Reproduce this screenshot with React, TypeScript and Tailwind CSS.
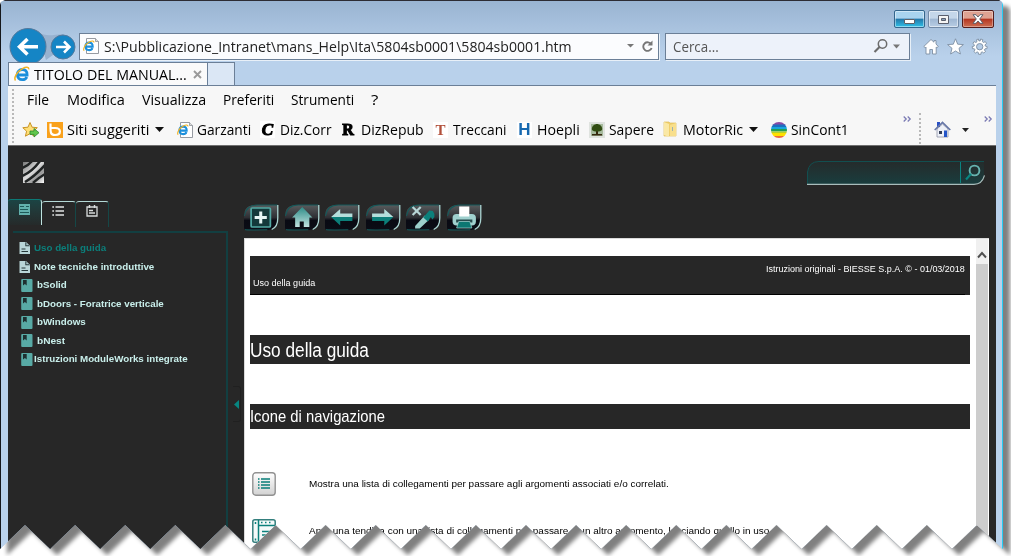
import React, { useLayoutEffect, useRef, useState } from "react";

type FitProps = { text: string; w: number; className?: string };

/* Single line of text, condensed or widened so that it spans w pixels. */
function Fit({ text, w, className = "" }: FitProps) {
  const ref = useRef<HTMLSpanElement>(null);
  const [scale, setScale] = useState(1);
  useLayoutEffect(() => {
    if (ref.current) setScale(w / ref.current.offsetWidth);
  }, [text, w]);
  return (
    <span className={"block shrink-0 whitespace-pre " + className} style={{ width: w }}>
      <span ref={ref} className="inline-block origin-left align-top" style={{ transform: `scaleX(${scale})` }}>
        {text}
      </span>
    </span>
  );
}

const zigzag = (() => {
  const pts = ["0px 5px", "1px 2px", "5px 0px", "999px 0px", "1002px 2px", "1003px 5px", "1003px 549px"];
  for (let i = 19; i >= 0; i--) {
    pts.push(`${(i * 50.1 + 25).toFixed(1)}px 525px`);
    pts.push(`${(i * 50.1).toFixed(1)}px 549px`);
  }
  return `polygon(${pts.join(",")})`;
})();

function IeIcon({ page = false }: { page?: boolean }) {
  return (
    <svg width="16" height="16" viewBox="0 0 16 16" className="shrink-0">
      {page && <path d="M3.5.5h9l3 3v12h-12z" fill="#fff" stroke="#8b9097" strokeWidth=".9" />}
      {page && <path d="M12.5.5v3h3" fill="#ddd" stroke="#8b9097" strokeWidth=".8" />}
      <g transform={page ? "translate(0 2) scale(.74)" : ""}>
        <path d="M3.5 9h9.6c.2-4-2-5.5-4.8-5.5-3 0-5 2-5 5s2 5.2 5 5.2c2.200 0 3.800-1 4.500-2.800" fill="none" stroke="#1b8fdc" strokeWidth="2.800" />
        <path d="M1.500 14.500C-.5 12 3 5.500 8.500 2.600c3.500-1.900 6.500-1.800 6.300.8" fill="none" stroke="#f0b323" strokeWidth="1.500" />
      </g>
    </svg>
  );
}

function Caret({ color = "#111" }: { color?: string }) {
  return (
    <svg width="9" height="5" viewBox="0 0 9 5" className="shrink-0">
      <path d="M0 0h9L4.500 5z" fill={color} />
    </svg>
  );
}

function Chevrons() {
  return (
    <svg width="9" height="6" viewBox="0 0 9 6" className="shrink-0">
      <path d="M.7.5 3.200 3 .7 5.500M4.700.5 7.200 3 4.700 5.500" fill="none" stroke="#7d7db5" strokeWidth="1.300" />
    </svg>
  );
}

function Chrome() {
  return (
    <div className="flex h-[84px] shrink-0 flex-col">
      <div className="flex h-[30px] shrink-0 justify-end gap-[3px] pt-[9px] pr-[2px]">
        <div className="flex h-[18px] w-[31px] items-center justify-center rounded-[2px] border border-[#33658c] bg-linear-to-b from-[#a9d4ef] from-45% via-[#2377a9] via-50% to-[#2fc0e8] pt-1 shadow-[inset_0_0_0_1px_#ffffff70]">
          <div className="h-[5px] w-[11px] rounded-[1px] border border-[#5e6067] bg-white" />
        </div>
        <div className="flex h-[18px] w-[31px] items-center justify-center rounded-[2px] border border-[#7189a6] bg-linear-to-b from-[#c5d7ea] from-45% via-[#9fb7d3] via-50% to-[#b8cde4] shadow-[inset_0_0_0_1px_#ffffff80]">
          <svg width="11" height="9" viewBox="0 0 11 9">
            <path d="M.5.5h10v8H.5z" fill="#f5f5f5" stroke="#5a5f6d" />
            <path d="M3.500 3.500h4v2h-4z" fill="#8aa0ba" stroke="#5a5f6d" />
          </svg>
        </div>
        <div className="flex h-[18px] w-[32px] items-center justify-center rounded-[2px] border border-[#551d1b] bg-linear-to-b from-[#dfa292] from-45% via-[#b3331f] via-50% to-[#cc6e52] shadow-[inset_0_0_0_1px_#ffffff55]">
          <svg width="12" height="10" viewBox="0 0 12 10">
            <path d="M1 .7h3L6 3 8 .7h3L7.700 5 11 9.300H8L6 7 4 9.300H1L4.300 5z" fill="#fff" stroke="#555967" strokeWidth=".9" />
          </svg>
        </div>
      </div>
      <div className="flex h-[31px] shrink-0 items-start">
        <svg width="71" height="38" viewBox="0 0 71 38" className="-mt-[3px] shrink-0">
          <path d="M30 4c8 5 14 3 25 2l8 8-25 18z" fill="#98b2cf" />
          <circle cx="20" cy="18.500" r="18" fill="#1585c5" stroke="#55799c" />
          <circle cx="55" cy="19" r="12" fill="#1585c5" stroke="#55799c" />
          <path d="M30 18.800H13M19.500 11l-8 7.800 8 7.800" fill="none" stroke="#fff" strokeWidth="3.500" />
          <path d="M48 19h12M56 13.500l5.500 5.500-5.500 5.500" fill="none" stroke="#fff" strokeWidth="2.600" />
        </svg>
        <div className="mt-[2px] flex h-[27px] w-[580px] shrink-0 items-center border border-[#6b7f97] bg-[#fbfcfe] pl-[3px] shadow-[1px_1px_0_#e8f0f8]">
          <span className="-mt-[2px] flex"><IeIcon page /></span>
          <Fit text="S:\Pubblicazione_Intranet\mans_Help\Ita\5804sb0001\5804sb0001.htm" w={468} className="ml-[5px] text-[14.500px] leading-5 text-[#222]" />
          <svg width="30" height="16" viewBox="0 0 30 16" className="-mt-[2px] mr-[2px] ml-auto">
            <path d="M1 6h7L4.500 9.500z" fill="#777" />
            <path d="M25.300 6.500a4.300 4.300 0 1 0 .3 3.500" fill="none" stroke="#777" strokeWidth="1.900" />
            <path d="M26.500 2.500v5h-5z" fill="#777" />
          </svg>
        </div>
        <div className="mt-[2px] ml-[6px] flex h-[27px] w-[245px] shrink-0 items-center border border-[#6b7f97] bg-[#edf2fa] pl-[7px] shadow-[1px_1px_0_#e8f0f8]">
          <Fit text="Cerca..." w={46} className="text-[14.500px] leading-5 text-[#555]" />
          <svg width="28" height="16" viewBox="0 0 28 16" className="-mt-px mr-[8px] ml-auto">
            <circle cx="9.500" cy="6" r="4.200" fill="none" stroke="#6c6c6c" strokeWidth="1.500" />
            <path d="m6.500 9-5 5" stroke="#6c6c6c" strokeWidth="2.200" />
            <path d="M20 6.500h7l-3.500 4z" fill="#777" />
          </svg>
        </div>
        <svg width="66" height="18" viewBox="0 0 66 18" className="mt-[7px] ml-[13px] shrink-0" fill="#fff" stroke="#7e8ea3" strokeWidth=".9">
          <path d="M8 1.500.8 8.500l1.500 1.200L3 9v7h3.800v-4.500h2.700V16h3.700V9l.7.7 1.400-1.200L13 6V2.500h-2v1.700z" />
          <path d="m32.500.8 2.200 5.400 5.700.4-4.400 3.700 1.400 5.700-4.900-3-4.900 3L29 10.300l-4.400-3.700 5.700-.4z" />
          <path
            fillRule="evenodd"
            d="m55.400 1 .5 1.900 1.300 0 .5-1.900 2.100.7-.4 1.900 1.100.9 1.800-.9 1.200 1.900-1.500 1.300.3 1.300 1.900.5-.3 2.100-1.900.1-.6 1.100 1.100 1.600-1.700 1.500-1.600-1.100-1.100.5-.2 1.900h-2.300l-.4-1.900-1.100-.5-1.600 1.100-1.600-1.500 1.100-1.600-.6-1.100-1.900-.1-.3-2.100 1.900-.5.3-1.300-1.500-1.300 1.200-1.900 1.800.9 1.100-.9-.4-1.900zM56.700 5.500a3.200 3.200 0 1 0 0 6.400 3.200 3.200 0 0 0 0-6.400z"
          />
        </svg>
      </div>
      <div className="z-10 flex h-[23px] shrink-0">
        <div className="flex h-[23px] w-[200px] shrink-0 items-center border border-b-0 border-[#6b7f97] bg-linear-to-r from-[#f8fafd] to-[#fafafa] pl-[5px]">
          <IeIcon />
          <Fit text="TITOLO DEL MANUAL..." w={153} className="mt-[2px] ml-[4px] text-[14.500px] leading-5 text-black" />
          <svg width="9" height="9" viewBox="0 0 9 9" className="ml-[6px]">
            <path d="m1 1 7 7M8 1 1 8" stroke="#9a9a9a" strokeWidth="1.900" />
          </svg>
        </div>
        <div className="h-[23px] w-[27px] border border-b-0 border-l-0 border-[#6b7f97] bg-[#dbe7f5]" />
      </div>
    </div>
  );
}

function Bars() {
  return (
    <div className="flex h-[61px] shrink-0 border-t border-b border-t-[#6b7f97] border-b-[#6f6f6f] bg-[#f7f7f7] text-[14.500px] leading-5 text-black">
      <div className="mt-[3px] ml-[4px] h-[54px] w-[2px] shrink-0 border-l-2 border-dotted border-[#b9b9b9]" />
      <div className="flex w-[898px] shrink-0 flex-col">
        <div className="flex h-[28px] items-center pl-[13px]">
          <Fit text="File" w={22} />
          <Fit text="Modifica" w={58} className="ml-[18px]" />
          <Fit text="Visualizza" w={64} className="ml-[17px]" />
          <Fit text="Preferiti" w={51} className="ml-[17px]" />
          <Fit text="Strumenti" w={63} className="ml-[17px]" />
          <Fit text="?" w={7} className="ml-[17px]" />
        </div>
        <div className="flex h-[31px] items-center pl-[8px]">
          <svg width="18" height="17" viewBox="0 0 18 17" className="shrink-0">
            <path d="m8 1.500 2.100 4.700 5.200.5-3.900 3.500 1.200 5L8 12.700l-4.600 2.500 1.200-5L.8 6.700 6 6.200z" fill="#ffdf76" stroke="#c99425" />
            <path d="M8 10h4V7.500l5 4.200-5 4.300v-2.600H8z" fill="#5fc64b" stroke="#2c8730" strokeWidth=".8" />
          </svg>
          <svg width="16" height="16" viewBox="0 0 16 16" className="ml-[7px] shrink-0">
            <path d="M0 0h16v16H0z" fill="#f9a11b" />
            <path d="M3.500 1.500v4.500h4.500c6.500 0 6.500 7 0 7-4.500 0-4.500-3-4.500-7" fill="none" stroke="#fff" strokeWidth="2.200" />
          </svg>
          <Fit text="Siti suggeriti" w={82} className="ml-[4px]" />
          <span className="ml-[6px] flex"><Caret /></span>
          <span className="ml-[13px] flex"><IeIcon page /></span>
          <Fit text="Garzanti" w={54} className="ml-[4px]" />
          <span className="ml-[9px] h-[17px] w-[15px] bg-white text-center font-['Liberation_Sans_Narrow','Liberation_Serif'] text-[17px] leading-[17px] font-black italic [-webkit-text-stroke:1px_black]">C</span>
          <Fit text="Diz.Corr" w={52} className="ml-[5px]" />
          <span className="ml-[8px] h-[17px] w-[16px] text-center font-['Liberation_Serif'] text-[16px] leading-[17px] font-black [-webkit-text-stroke:1px_black]">R</span>
          <Fit text="DizRepub" w={63} className="ml-[5px]" />
          <span className="ml-[9px] h-[16px] w-[15px] bg-white text-center font-['Liberation_Serif'] text-[15px] leading-[16px] font-bold text-[#b2503b]">T</span>
          <Fit text="Treccani" w={54} className="ml-[5px]" />
          <span className="ml-[10px] h-[16px] w-[15px] bg-white text-center font-['Liberation_Sans'] text-[17px] leading-[16px] font-bold text-[#1769b0]">H</span>
          <Fit text="Hoepli" w={43} className="ml-[5px]" />
          <svg width="16" height="16" viewBox="0 0 16 16" className="ml-[9px] shrink-0">
            <path d="M0 0h16v16H0z" fill="#dfe3df" />
            <path d="M2 2h12v12H2z" fill="#a6ba9d" />
            <path d="M7 8h2v5H7zM3 12h10v1.500H3z" fill="#36280f" />
            <path d="M3 8C2 4 6 2 8 2s6 2 5 6c-2 2-8 2-10 0z" fill="#314d12" />
          </svg>
          <Fit text="Sapere" w={45} className="ml-[4px]" />
          <svg width="15" height="17" viewBox="0 0 15 17" className="ml-[9px] shrink-0">
            <path d="M1 1h5l1 1h6v13H1z" fill="#f0cf6c" stroke="#dfbd5b" strokeWidth=".7" />
            <path d="M1 1 6 3v13l-5-2z" fill="#fae8a5" />
            <path d="M7 4l6-2v13H7z" fill="#f8df8c" />
            <path d="M9.500 6v4" stroke="#9db0b2" />
          </svg>
          <Fit text="MotorRic" w={60} className="ml-[5px]" />
          <span className="ml-[6px] flex"><Caret /></span>
          <svg width="16" height="16" viewBox="0 0 16 16" className="ml-[13px] shrink-0">
            <clipPath id="ball"><circle cx="8" cy="8" r="8" /></clipPath>
            <g clipPath="url(#ball)">
              <path d="M0 0h16v3H0z" fill="#8a4aa4" />
              <path d="M0 2.500h16V5H0z" fill="#1d6fc0" />
              <path d="M0 5h16v2H0z" fill="#19a5dd" />
              <path d="M0 7h16v2.500H0z" fill="#209f58" />
              <path d="M0 9.500h16V11H0z" fill="#b6cf2b" />
              <path d="M0 11h16v3H0z" fill="#ffe000" />
              <path d="M0 14h16v2H0z" fill="#ef6b37" />
            </g>
          </svg>
          <Fit text="SinCont1" w={58} className="ml-[4px]" />
        </div>
      </div>
      <div className="-ml-[9px] mt-[30px] flex shrink-0"><Chevrons /></div>
      <div className="mt-[27px] ml-[7px] h-[31px] w-[2px] shrink-0 border-l-2 border-dotted border-[#b9b9b9]" />
      <svg width="17" height="17" viewBox="0 0 17 17" className="mt-[35px] ml-[13px] shrink-0">
        <path d="M3 8v8h11V8L8.500 3z" fill="#eef1f8" stroke="#8d92a5" strokeWidth=".8" />
        <path d="M3 1h3v5H3z" fill="#2a51c5" />
        <path d="M.7 9 8.500 1.500 16.300 9" fill="none" stroke="#6878a8" strokeWidth="1.700" />
        <path d="M5 10h3v3H5z" fill="#333e58" />
        <path d="M10 9.500h3V16h-3z" fill="#2455c8" />
      </svg>
      <svg width="7" height="4" viewBox="0 0 7 4" className="mt-[42px] ml-[11px] shrink-0">
        <path d="M0 0h7L3.500 4z" fill="#222" />
      </svg>
      <div className="mt-[30px] ml-[15px] flex shrink-0"><Chevrons /></div>
    </div>
  );
}

function DocIcon() {
  return (
    <svg width="12" height="12" viewBox="0 0 12 12" className="shrink-0">
      <path d="M.5 0H7l4 3.700V12H.5z" fill="#b9d6d8" />
      <path d="M6.300 0v4.300H11z" fill="#26383a" />
      <path d="M7.300 1v2.300h2.500z" fill="#b9d6d8" />
      <path d="M2.500 7h4M2.500 9.500h6.500" fill="none" stroke="#26383a" strokeWidth="1" />
    </svg>
  );
}

function BookIcon() {
  return (
    <svg width="12" height="13" viewBox="0 0 12 13" className="shrink-0">
      <rect x=".2" width="11.300" height="13" rx="1" fill="#58aaa5" />
      <path d="M2 1h3.700v5.500L3.900 5 2 6.500z" fill="#1e2f30" />
    </svg>
  );
}

const topics: { text: string; w: number; doc?: boolean; active?: boolean; tight?: boolean }[] = [
  { text: "Uso della guida", w: 72, doc: true, active: true },
  { text: "Note tecniche introduttive", w: 120, doc: true },
  { text: "bSolid", w: 30 },
  { text: "bDoors - Foratrice verticale", w: 127 },
  { text: "bWindows", w: 49 },
  { text: "bNest", w: 28 },
  { text: "Istruzioni ModuleWorks integrate", w: 154, tight: true },
];

function Sidebar() {
  return (
    <div className="flex w-[220px] shrink-0 flex-col">
      <div className="flex h-[32px] shrink-0 items-start">
        <div className="flex h-[26px] w-[34px] justify-center rounded-t-[3px] border-t border-r border-t-[#0d7975] border-r-[#bfe3df] bg-linear-to-b from-[#1b4444] to-[#252a2a] pt-[4px]">
          <svg width="11" height="11" viewBox="0 0 11 11">
            <path d="M0 0h11v11H0z" fill="#62b1ad" />
            <path d="M1 2.500h4M1 5.500h8M1 8.500h9M7 2.500h3" stroke="#1e5a58" strokeWidth="1" />
          </svg>
        </div>
        <div className="mt-[2px] flex h-[26px] w-[34px] justify-center rounded-t-[3px] border-t border-r border-t-[#b4d9d7] border-r-[#154747] pt-[4px] pr-[1px]">
          <svg width="12" height="10" viewBox="0 0 12 10">
            <path d="M3.500 1H12M3.500 5H12M3.500 9H12M.3 1H2M.3 5H2M.3 9H2" stroke="#e1e4e4" strokeWidth="1.500" />
          </svg>
        </div>
        <div className="mt-[2px] flex h-[26px] w-[33px] justify-center rounded-t-[3px] border-t border-r border-t-[#b4d9d7] border-r-[#154747] pt-[3px]">
          <svg width="12" height="12" viewBox="0 0 12 12" fill="none" stroke="#d8dcdc">
            <path d="M1 2h10v9H1z" strokeWidth="1.300" />
            <path d="M3.500 0v3M8.500 0v3M3 5.500h4M3 8h6" strokeWidth="1.400" />
          </svg>
        </div>
      </div>
      <div className="ml-[5px] flex flex-1 flex-col border-t-2 border-r-2 border-[#123f41] pt-[6px] pl-[6px]">
        {topics.map((t) => (
          <div key={t.text} className="flex h-[18.500px] shrink-0 items-center">
            {t.doc ? <DocIcon /> : <span className="ml-[2px] flex"><BookIcon /></span>}
            <Fit
              text={t.text}
              w={t.w}
              className={
                "text-[9.750px] leading-3 font-bold " +
                (t.active ? "text-[#0b7f7b] " : "text-[#c9efeb] ") +
                (t.doc ? "ml-[3px]" : t.tight ? "ml-px" : "ml-[4px]")
              }
            />
          </div>
        ))}
      </div>
    </div>
  );
}

const toolIcons: React.ReactNode[] = [
  <g>
    <rect x="7" y="4" width="19" height="19" rx="1" fill="#14393b" stroke="#51a9a4" strokeWidth="1.700" />
    <path d="M16.500 7.500v12M10.500 13.500h12" stroke="#e6f5f4" strokeWidth="3" />
  </g>,
  <g>
    <path d="M17 3 7 13.500h3V23h4.500v-5.500h4V23H24v-9.500h3z" fill="url(#teal)" />
  </g>,
  <g>
    <path d="M6 13 15 5v4.500h12V13z" fill="#b4dedb" />
    <path d="M6 13l9 8.500v-4.500h12V13z" fill="#0c7e79" />
  </g>,
  <g>
    <path d="M27 13 18 5v4.500H6V13z" fill="#b4dedb" />
    <path d="M27 13l-9 8.500v-4.500H6V13z" fill="#0c7e79" />
  </g>,
  <g>
    <path d="m6.500 3 8 8m0-8-8 8" stroke="#b7d5d6" strokeWidth="2.200" />
    <path d="M9 24.500 9 22l9.500-10.500 4.500 4-9.500 9z" fill="#9ccfcb" />
    <path d="m17 13.500 6-7 3.500.5 1.500 3v3l-2 2.500-1.500-2.500-3 4.500z" fill="#0c807b" />
  </g>,
  <g>
    <rect x="5.500" y="10" width="23" height="11.500" rx="4" fill="#9fd0ce" />
    <path d="M9 15.500h16v3H9z" fill="#25494b" />
    <path d="M12 2.500h10v10H12z" fill="#fff" />
    <path d="M11.500 17.500h11l2 6.500h-15z" fill="#0b7772" stroke="#a7d4d2" strokeWidth=".7" />
  </g>,
];

function Toolbar() {
  return (
    <div className="flex h-[39px] shrink-0 gap-[5.500px] pt-[5px]">
      {toolIcons.map((icon, i) => (
        <svg key={i} width="35" height="27" viewBox="0 0 34.500 27" preserveAspectRatio="none" className="shrink-0">
          <defs>
            <linearGradient id="btn" x2="0" y2="1">
              <stop offset="0" stopColor="#585b5d" />
              <stop offset=".5" stopColor="#2e2f34" />
              <stop offset=".62" stopColor="#090a13" />
              <stop offset="1" stopColor="#0b0d16" />
            </linearGradient>
            <linearGradient id="teal" x2="0" y2="1">
              <stop offset="0" stopColor="#2e8c87" />
              <stop offset="1" stopColor="#c0e2e0" />
            </linearGradient>
          </defs>
          <path d="M0 24V12Q0 1 12 1h21v14q0 11-9 11H2q-2 0-2-2z" fill="url(#btn)" />
          <path d="M.5 12Q2 1 13 1h20M1 25.500q1 .7 22 .3" fill="none" stroke="#14595a" />
          <path d="M33.300 1v13q0 9-6 11.500" fill="none" stroke="#abd4d2" strokeWidth="1.300" />
          {icon}
        </svg>
      ))}
    </div>
  );
}

function Page() {
  return (
    <div className="flex w-[745px] flex-1 shrink-0 border-t border-l border-[#dadada] bg-white text-black">
      <div className="flex w-[731px] shrink-0 flex-col pt-[17px] pl-[5px]">
        <div className="flex h-[39px] w-[720px] shrink-0 flex-col bg-[#272727] text-white">
          <div className="flex h-[25px] items-center justify-end pr-[5px]">
            <Fit text="Istruzioni originali - BIESSE S.p.A. © - 01/03/2018" w={199} className="text-[9.750px] leading-3" />
          </div>
          <div className="mr-[5px] flex h-[14px] items-start border-b border-black pl-[3px]">
            <Fit text="Uso della guida" w={62} className="-mt-[4px] text-[9.750px] leading-3" />
          </div>
        </div>
        <div className="mt-[40px] flex h-[29px] w-[720px] shrink-0 items-center bg-[#272727] text-white">
          <Fit text="Uso della guida" w={119} className="text-[20px] leading-6" />
        </div>
        <div className="mt-[40px] flex h-[25px] w-[720px] shrink-0 items-center bg-[#272727] text-white">
          <Fit text="Icone di navigazione" w={135} className="text-[17px] leading-5" />
        </div>
        <div className="mt-[43px] flex h-[24px] shrink-0 items-center pl-[2px]">
          <svg width="24" height="24" viewBox="0 0 24 24" className="shrink-0">
            <defs>
              <linearGradient id="key" x2="0" y2="1">
                <stop offset="0" stopColor="#fff" />
                <stop offset="1" stopColor="#d2d2d2" />
              </linearGradient>
            </defs>
            <rect x=".8" y=".8" width="22.400" height="22.400" rx="3" fill="url(#key)" stroke="#929292" strokeWidth="1.400" />
            <path d="M9 7h9M9 10h9M9 13h9M9 16h9M6 7h1.500M6 10h1.500M6 13h1.500M6 16h1.500" stroke="#087d78" strokeWidth="1.400" />
          </svg>
          <Fit text="Mostra una lista di collegamenti per passare agli argomenti associati e/o correlati." w={360} className="ml-[33px] text-[9.750px] leading-3" />
        </div>
        <div className="mt-[23px] flex h-[24px] shrink-0 items-center pl-[2px]">
          <svg width="24" height="24" viewBox="0 0 24 24" className="shrink-0" fill="none" stroke="#0b807b">
            <rect x=".8" y=".8" width="22.400" height="22.400" rx="2" fill="#f4f9f9" stroke="#347f7d" strokeWidth="1.500" />
            <path d="M6.500 1v22M6.500 6.500H23M10 12.500h9M10 16h8" strokeWidth="1.500" />
            <path d="M3.500 3v2M3.500 19.500v2M9 3.500h1.500M13 3.500h1.500M17 3.500h1.500" strokeWidth="1.500" />
          </svg>
          <Fit text="Apre una tendina con una lista di collegamenti per passare a un altro argomento, lasciando quello in uso." w={463} className="ml-[33px] text-[9.750px] leading-3" />
        </div>
      </div>
      <div className="flex w-[12px] flex-col bg-[#cdcdcd]">
        <div className="flex h-[25px] items-center justify-center bg-[#f0f0f0] pt-[7px]">
          <svg width="10" height="8" viewBox="0 0 10 8">
            <path d="m1 6.500 4-4.500 4 4.500" fill="none" stroke="#505050" strokeWidth="1.900" />
          </svg>
        </div>
      </div>
    </div>
  );
}

function Help() {
  return (
    <div className="flex flex-1 flex-col bg-[#272727] font-['Liberation_Sans',sans-serif]">
      <div className="flex h-[53px] shrink-0 items-start justify-between pr-[11px] pl-[15px]">
        <svg width="21" height="21" viewBox="0 0 21 21" className="mt-[16px]">
          <defs>
            <linearGradient id="steel" x2="1" y2="1">
              <stop offset="0" stopColor="#777" />
              <stop offset=".45" stopColor="#ddd" />
              <stop offset=".7" stopColor="#999" />
              <stop offset="1" stopColor="#fff" />
            </linearGradient>
          </defs>
          <path d="M0 0h21v21H0z" fill="url(#steel)" />
          <path d="M-1 6Q5 4 9-1M-1 14Q9 10 17-1M2 20Q12 14 22 3M10 21Q15 16 22 12" fill="none" stroke="#202323" strokeWidth="2.500" />
        </svg>
        <svg width="178" height="24" viewBox="0 0 178 24" className="mt-[15px]">
          <defs>
            <linearGradient id="field" x2="0" y2="1">
              <stop offset="0" stopColor="#252b2b" />
              <stop offset="1" stopColor="#193d3e" />
            </linearGradient>
          </defs>
          <path d="M.5 23V11Q2 .5 12 .5h165V12q0 11-10 11z" fill="url(#field)" />
          <path d="M.5 23V11Q2 .5 12 .5h165" fill="none" stroke="#124f50" />
          <path d="M0 23.300h167q8 0 10.500-9" fill="none" stroke="#a9bdbc" strokeWidth="1.200" />
          <path d="M153.500 1v21" stroke="#0b8480" />
          <circle cx="167.500" cy="9.500" r="4.900" fill="none" stroke="#67b3af" strokeWidth="1.900" />
          <path d="m164 13-5 5.500" stroke="#098580" strokeWidth="2.200" />
        </svg>
      </div>
      <div className="flex flex-1">
        <Sidebar />
        <div className="flex w-[16px] shrink-0 flex-col pt-[187px] pl-[5px]">
          <div className="flex h-[36px] w-[8px] items-center justify-end rounded-r-[3px] border border-l-0 border-[#202020] pr-px">
            <svg width="5" height="9" viewBox="0 0 5 9">
              <path d="M5 0v9L0 4.500z" fill="#078580" />
            </svg>
          </div>
        </div>
        <div className="flex flex-1 flex-col">
          <Toolbar />
          <Page />
        </div>
      </div>
    </div>
  );
}

export default function App() {
  return (
    <div className="h-[556px] w-[1011px] overflow-hidden bg-white font-['Open_Sans',sans-serif]">
      <div className="drop-shadow-[7px_6px_2px_#808080]">
        <div
          className="flex h-[549px] w-[1003px] flex-col border-t border-r border-l border-t-[#2c2c34] border-r-[#24cdf4] border-l-[#15171b] bg-[#b9d1eb] bg-linear-to-b from-[#99b4d2] to-[#b9d1eb] to-[55px] pr-[6px] pl-[7px]"
          style={{ clipPath: zigzag }}
        >
          <Chrome />
          <Bars />
          <Help />
        </div>
      </div>
    </div>
  );
}
